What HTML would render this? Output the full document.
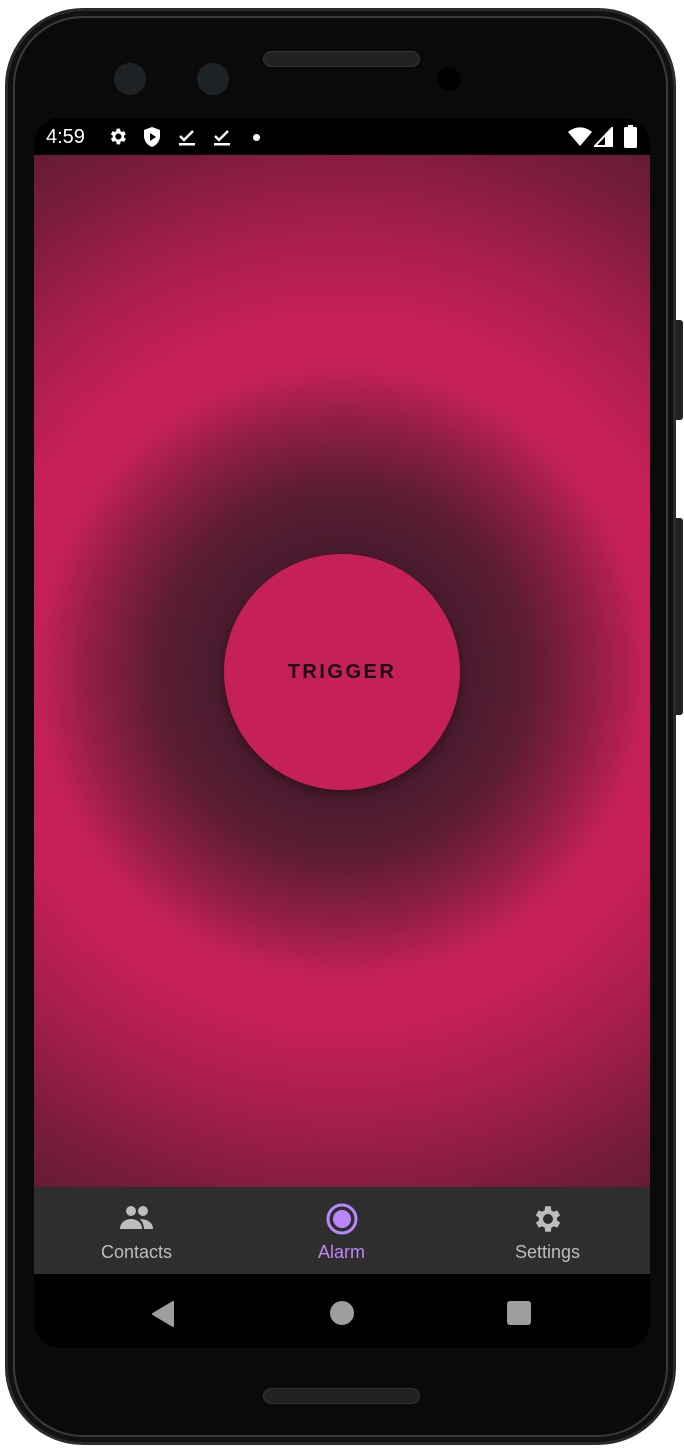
<!DOCTYPE html>
<html><head><meta charset="utf-8"><style>
*{margin:0;padding:0;box-sizing:border-box}
body{width:684px;height:1450px;background:#fff;position:relative;overflow:hidden;font-family:"Liberation Sans",sans-serif}
.btn{position:absolute;right:1px;width:8px;background:#222;border-radius:0 3px 3px 0}
.phone{position:absolute;left:5px;top:8px;width:671px;height:1437px;background:#0a0a0a;border-radius:78px;border:3px solid #2b2b2b;box-shadow:inset 0 0 0 5px #111,inset 0 0 0 7px #3a3a3a}
.screen{position:absolute;left:34px;top:118px;width:616px;height:1230px;background:#000;border-radius:26px;overflow:hidden}
.status{height:37px;color:#fff;position:relative}
.content{position:absolute;top:37px;left:0;width:616px;height:1032px;background:radial-gradient(circle at 308px 517px,#3e1a28 0,#4a1b2e 125px,#5c1c34 185px,#901e44 250px,#c4205a 305px,#c82058 345px,#a81e4c 440px,#761c3a 550px,#4a1a2a 680px)}
.trig{position:absolute;left:190px;top:399px;width:236px;height:236px;border-radius:50%;background:#c62059;box-shadow:0 4px 10px rgba(0,0,0,.35);display:flex;align-items:center;justify-content:center;font-size:20px;font-weight:bold;letter-spacing:2.5px;color:#1a0a10}
.nav{position:absolute;top:1069px;left:0;width:616px;height:87px;background:#2e2e2e}
.item{position:absolute;top:0;width:205px;height:87px;font-size:18px;color:#bdbdbd}
.item svg{position:absolute;left:50%;transform:translateX(-50%)}
.item span{position:absolute;top:55px;left:0;width:100%;text-align:center}
</style></head><body>
<div class="btn" style="top:320px;height:100px"></div>
<div class="btn" style="top:518px;height:197px"></div>
<div class="phone"></div>
<div style="position:absolute;left:263px;top:51px;width:157px;height:16px;border-radius:8px;background:#222;border:1px solid #333"></div>
<div style="position:absolute;left:114px;top:63px;width:32px;height:32px;border-radius:50%;background:#1c2226;border:2px solid #222"></div>
<div style="position:absolute;left:197px;top:63px;width:32px;height:32px;border-radius:50%;background:#1c2226;border:2px solid #222"></div>
<div style="position:absolute;left:437px;top:67px;width:24px;height:24px;border-radius:50%;background:#000"></div>
<div style="position:absolute;left:263px;top:1388px;width:157px;height:16px;border-radius:8px;background:#222;border:1px solid #333"></div>
<div class="screen">
 <div class="status">
  <span style="position:absolute;left:12px;top:8px;font-size:20px">4:59</span>
  <svg style="position:absolute;left:73px;top:8px" width="21" height="21" viewBox="0 0 24 24"><path fill="#fff" d="M19.4 13a7.5 7.5 0 0 0 0-2l2.1-1.6-2-3.5-2.5 1a7 7 0 0 0-1.7-1L15 3h-4l-.4 2.9a7 7 0 0 0-1.7 1l-2.5-1-2 3.5L6.6 11a7.5 7.5 0 0 0 0 2l-2.1 1.6 2 3.5 2.5-1a7 7 0 0 0 1.7 1L11 21h4l.4-2.9a7 7 0 0 0 1.7-1l2.5 1 2-3.5zM13 15.5a3.5 3.5 0 1 1 0-7 3.5 3.5 0 0 1 0 7z"/></svg>
  <svg style="position:absolute;left:108px;top:8px" width="20" height="22" viewBox="0 0 20 22"><path fill="#fff" d="M10 1L2 4v6c0 5 3.5 9.5 8 11 4.5-1.5 8-6 8-11V4z"/><path fill="#000" d="M8 7v8l6-4z"/></svg>
  <svg style="position:absolute;left:143px;top:9px" width="20" height="20" viewBox="0 0 20 20"><path d="M3 9l4 4 9-9" stroke="#fff" stroke-width="2.5" fill="none"/><rect x="2" y="16" width="16" height="2.5" fill="#fff"/></svg>
  <svg style="position:absolute;left:178px;top:9px" width="20" height="20" viewBox="0 0 20 20"><path d="M3 9l4 4 9-9" stroke="#fff" stroke-width="2.5" fill="none"/><rect x="2" y="16" width="16" height="2.5" fill="#fff"/></svg>
  <div style="position:absolute;left:219px;top:16px;width:7px;height:7px;border-radius:50%;background:#fff"></div>
  <svg style="position:absolute;left:534px;top:9px" width="24" height="20" viewBox="0 0 24 20"><path fill="#fff" d="M12 19L0 5a18 18 0 0 1 24 0z"/></svg>
  <svg style="position:absolute;left:560px;top:9px" width="20" height="20" viewBox="0 0 20 20"><path d="M18 1L1 19h17z" fill="none" stroke="#fff" stroke-width="2"/><path d="M18 1v18h-7V8z" fill="#fff"/></svg>
  <svg style="position:absolute;left:590px;top:7px" width="13" height="23" viewBox="0 0 13 23"><rect x="4" y="0" width="5" height="3" fill="#fff"/><rect x="0" y="2" width="13" height="21" rx="1.5" fill="#fff"/></svg>
 </div>
 <div class="content"><div class="trig">TRIGGER</div></div>
 <div class="nav">
  <div class="item" style="left:0"><svg style="top:18px" width="36" height="27" viewBox="0 0 36 27"><circle cx="12" cy="6" r="5" fill="#bdbdbd"/><circle cx="24" cy="6" r="5" fill="#bdbdbd"/><path d="M1 24c0-7 6-10 11-10s11 3 11 10z" fill="#bdbdbd"/><path d="M21 14c5 0 13 2 13 10h-9c0-4-2-8-4-10z" fill="#bdbdbd"/></svg><span>Contacts</span></div>
  <div class="item" style="left:205px;color:#bb86fc"><svg style="top:15px" width="34" height="34" viewBox="0 0 34 34"><circle cx="17" cy="17" r="14" fill="none" stroke="#bb86fc" stroke-width="3"/><circle cx="17" cy="17" r="9" fill="#bb86fc"/></svg><span>Alarm</span></div>
  <div class="item" style="left:411px"><svg style="top:15px" width="34" height="34" viewBox="0 0 24 24"><path fill="#bdbdbd" d="M19.4 13a7.5 7.5 0 0 0 0-2l2.1-1.6-2-3.5-2.5 1a7 7 0 0 0-1.7-1L15 3h-4l-.4 2.9a7 7 0 0 0-1.7 1l-2.5-1-2 3.5L6.6 11a7.5 7.5 0 0 0 0 2l-2.1 1.6 2 3.5 2.5-1a7 7 0 0 0 1.7 1L11 21h4l.4-2.9a7 7 0 0 0 1.7-1l2.5 1 2-3.5zM13 15.5a3.5 3.5 0 1 1 0-7 3.5 3.5 0 0 1 0 7z" transform="translate(-1 0)"/></svg><span>Settings</span></div>
 </div>
 <svg style="position:absolute;left:117px;top:1183px" width="24" height="26" viewBox="0 0 24 26"><path d="M2 13L22 1v24z" fill="#9e9e9e" stroke="#9e9e9e" stroke-linejoin="round" stroke-width="2"/></svg>
 <div style="position:absolute;left:296px;top:1183px;width:24px;height:24px;border-radius:50%;background:#9e9e9e"></div>
 <div style="position:absolute;left:473px;top:1183px;width:24px;height:24px;border-radius:3px;background:#9e9e9e"></div>
</div>
</body></html>
